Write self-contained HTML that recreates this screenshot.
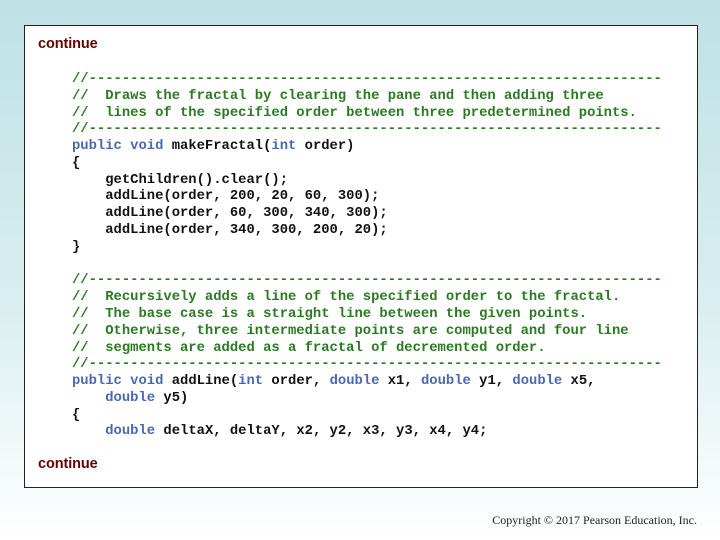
<!DOCTYPE html>
<html><head><style>
body{margin:0;width:720px;height:540px;background:linear-gradient(to bottom,#bfe1e5 0%,#d8eef0 55%,#ffffff 100%);position:relative;overflow:hidden;font-family:"Liberation Sans",sans-serif}
.box{position:absolute;left:24px;top:25px;width:672px;height:461px;background:#fff;border:1px solid #222}
.cont{position:absolute;left:38px;font-size:14.5px;font-weight:bold;color:#650000;letter-spacing:-0.1px}
pre{position:absolute;left:72px;top:71px;margin:0;font-family:"Liberation Mono",monospace;font-weight:bold;font-size:13.85px;line-height:16.78px;color:#111}
.c{color:#2a7a22}.k{color:#4a68b0}
.copy{position:absolute;right:23px;top:513px;font-family:"Liberation Serif",serif;font-size:12px;color:#222;letter-spacing:0}
</style></head><body>
<div class="box"></div>
<div class="cont" style="top:36px">continue</div>
<pre><span class="c">//---------------------------------------------------------------------
//  Draws the fractal by clearing the pane and then adding three
//  lines of the specified order between three predetermined points.
//---------------------------------------------------------------------</span>
<span class="k">public void</span> makeFractal(<span class="k">int</span> order)
{
    getChildren().clear();
    addLine(order, 200, 20, 60, 300);
    addLine(order, 60, 300, 340, 300);
    addLine(order, 340, 300, 200, 20);
}

<span class="c">//---------------------------------------------------------------------
//  Recursively adds a line of the specified order to the fractal.
//  The base case is a straight line between the given points.
//  Otherwise, three intermediate points are computed and four line
//  segments are added as a fractal of decremented order.
//---------------------------------------------------------------------</span>
<span class="k">public void</span> addLine(<span class="k">int</span> order, <span class="k">double</span> x1, <span class="k">double</span> y1, <span class="k">double</span> x5,
    <span class="k">double</span> y5)
{
    <span class="k">double</span> deltaX, deltaY, x2, y2, x3, y3, x4, y4;</pre>
<div class="cont" style="top:456px">continue</div>
<div class="copy">Copyright © 2017 Pearson Education, Inc.</div>
</body></html>
